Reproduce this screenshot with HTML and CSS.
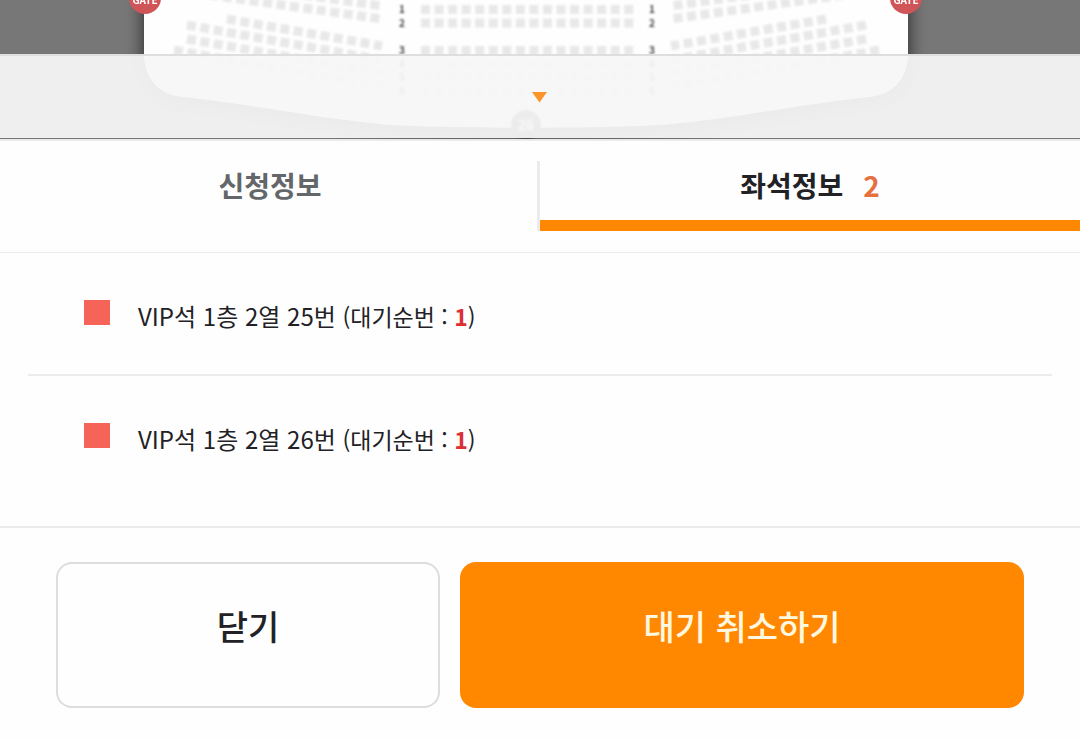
FILE: index.html
```html
<!DOCTYPE html>
<html lang="ko">
<head>
    <meta charset="UTF-8">
    <meta name="viewport" content="width=device-width, initial-scale=1.0">
    <title>좌석정보</title>
    <link rel="stylesheet" href="styles.css">
</head>
<body>

    <!-- Seat map, partly covered by the sheet handle -->
    <div class="map">
        <svg class="map-drawing" viewBox="0 0 1080 139" preserveAspectRatio="xMidYMin slice" aria-hidden="true">
            <defs>
                <filter id="shadow" x="-10%" y="-20%" width="120%" height="140%">
                    <feGaussianBlur stdDeviation="9"/>
                </filter>
                <filter id="soft">
                    <feGaussianBlur stdDeviation="1"/>
                </filter>
                <!-- each row of seats is one dashed line -->
                <g id="side-rows" class="seats">
                    <path d="M196 -20 L382 6"/>
                    <path d="M196 -7 L382 19"/>
                    <path d="M227 19 L382 46"/>
                    <path d="M187 25 L382 60"/>
                    <path d="M187 39 L382 73"/>
                    <path d="M174 50 L382 87"/>
                </g>
                <path id="hall" d="M144 -40 V54 C144 78 158 94 182 97 C250 104 310 117 380 124 C430 129 622 129 672 124 C742 117 802 104 870 97 C894 94 908 78 908 54 V-40 Z"/>
            </defs>
            <use href="#hall" class="hall-shadow" y="4" filter="url(#shadow)"/>
            <use href="#hall" class="hall"/>
            <g filter="url(#soft)">
                <use href="#side-rows"/>
                <use href="#side-rows" transform="translate(1053 0) scale(-1 1)"/>
                <g class="seats">
                    <path d="M421 9.5 H634"/>
                    <path d="M421 23 H634"/>
                    <path d="M421 50.5 H634"/>
                    <path d="M421 64.5 H634"/>
                    <path d="M421 77.5 H634"/>
                    <path d="M421 91 H634"/>
                </g>
                <g class="row-number">
                    <text x="402" y="13">1</text>
                    <text x="402" y="27">2</text>
                    <text x="402" y="54">3</text>
                    <text x="402" y="68">4</text>
                    <text x="402" y="81">5</text>
                    <text x="402" y="95">6</text>
                    <text x="652" y="13">1</text>
                    <text x="652" y="27">2</text>
                    <text x="652" y="54">3</text>
                    <text x="652" y="68">4</text>
                    <text x="652" y="81">5</text>
                    <text x="652" y="95">6</text>
                </g>
                <circle class="exit" cx="526" cy="125" r="15"/>
                <text class="exit-label" x="526" y="130">26</text>
            </g>
            <circle class="gate" cx="145" cy="-2" r="16"/>
            <circle class="gate" cx="906" cy="-2" r="16"/>
            <text class="gate-label" x="145" y="4">GATE</text>
            <text class="gate-label" x="906" y="4">GATE</text>
        </svg>
        <button class="handle" type="button" aria-label="접기">
            <svg width="16" height="12" viewBox="0 0 16 12" aria-hidden="true"><path d="M0 1 H15 L7.5 11.5 Z" fill="#fb9429"/></svg>
        </button>
    </div>

    <div class="tabs" role="tablist">
        <button class="tab" type="button" role="tab" aria-selected="false">신청정보</button>
        <button class="tab tab-active" type="button" role="tab" aria-selected="true">좌석정보 <span class="count">2</span></button>
    </div>

    <ul class="seat-list">
        <li class="seat">
            <span class="grade"></span>
            <span class="seat-name">VIP석 1층 2열 25번 <small class="wait">(대기순번 : <strong>1</strong>)</small></span>
        </li>
        <li class="seat">
            <span class="grade"></span>
            <span class="seat-name">VIP석 1층 2열 26번 <small class="wait">(대기순번 : <strong>1</strong>)</small></span>
        </li>
    </ul>

    <div class="actions">
        <button class="btn btn-close" type="button">닫기</button>
        <button class="btn btn-cancel" type="button">대기 취소하기</button>
    </div>

</body>
</html>
```
FILE: styles.css
```css
* {
    margin: 0;
    padding: 0;
    box-sizing: border-box;
}

body {
    font-family: 'Noto Sans CJK KR', sans-serif;
    background-color: #fefefe;
    color: #222226;
}

button {
    font-family: inherit;
    border: none;
    background: none;
    cursor: pointer;
}

/* Seat map */
.map {
    position: relative;
    height: 139px;
    background-color: #777;
    overflow: hidden;
}

.map-drawing {
    display: block;
    width: 100%;
    height: 100%;
}

.hall {
    fill: #fefefe;
}

.hall-shadow {
    fill: #000;
    opacity: 0.7;
}

.seats {
    fill: none;
    stroke: #e8e8e8;
    stroke-width: 9;
    stroke-dasharray: 9 4.55;
}

.row-number {
    font-size: 10px;
    font-weight: 700;
    fill: #444;
    text-anchor: middle;
}

.gate {
    fill: #d05558;
}

.gate-label {
    font-size: 10px;
    font-weight: 700;
    fill: #fff;
    text-anchor: middle;
}

.exit {
    fill: #444;
}

.exit-label {
    font-size: 13px;
    font-weight: 700;
    fill: #fff;
    text-anchor: middle;
}

/* Translucent bar over the lower part of the map */
.handle {
    position: absolute;
    left: 0;
    bottom: 1px;
    width: 100%;
    height: 84px;
    display: flex;
    justify-content: center;
    align-items: center;
    border-top: 2px solid #dedede;
    background-color: rgba(246, 246, 246, 0.94);
}

/* Tabs */
.tabs {
    display: flex;
    padding: 20px 0 21px;
    border-top: 2px solid #ebebee;
    border-bottom: 1px solid #ebebeb;
}

.tab {
    flex: 1 1 50%;
    display: flex;
    justify-content: center;
    gap: 20px;
    height: 70px;
    padding: 4px 0 0 3px;
    font-size: 28px;
    font-weight: 700;
    line-height: 40px;
    color: #63676a;
    border-right: 3px solid #ebebef;
}

.tab-active {
    padding-left: 0;
    color: #222226;
    border-right: none;
    border-bottom: 11px solid #ff8800;
}

.count {
    color: #e57040;
}

/* Seats */
.seat-list {
    list-style: none;
    padding: 0 28px 29px;
}

.seat {
    display: flex;
    gap: 28px;
    padding: 47px 56px 42px;
}

.seat + .seat {
    border-top: 2px solid #ebeced;
}

.grade {
    width: 26px;
    height: 25px;
    background-color: #f66459;
}

.seat-name {
    font-size: 24px;
    line-height: 32px;
}

.wait {
    font-size: 23px;
    line-height: 1;
}

.wait strong {
    color: #dc3034;
}

/* Bottom buttons */
.actions {
    display: grid;
    grid-template-columns: 32fr 47fr;
    gap: 20px;
    padding: 34px 56px 31px;
    border-top: 2px solid #ebebeb;
}

.btn {
    height: 146px;
    padding-bottom: 20px;
    font-size: 34px;
    font-weight: 500;
    border-radius: 16px;
}

.btn-close {
    color: #222226;
    border: 2px solid #dcdddf;
}

.btn-cancel {
    color: #fff8e0;
    background-color: #ff8800;
}
```
